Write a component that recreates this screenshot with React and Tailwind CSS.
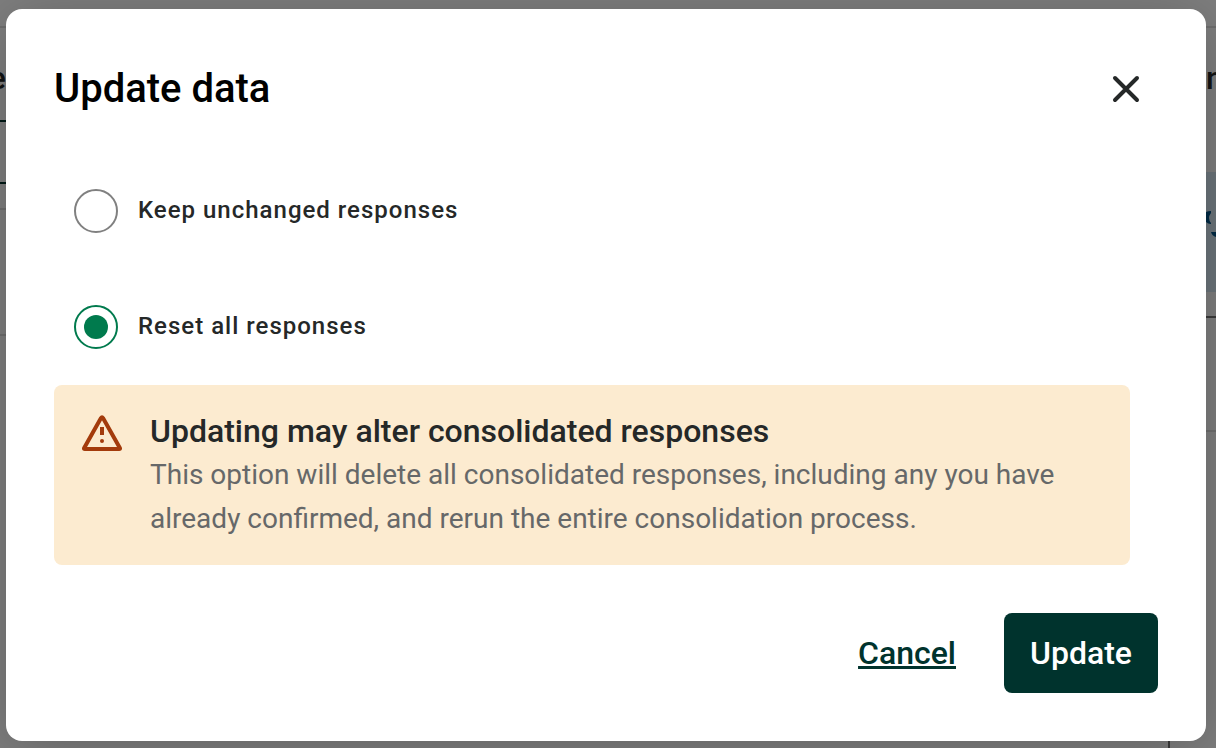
import React, { useState } from 'react';

const options = [
  { value: 'keep', label: 'Keep unchanged responses' },
  { value: 'reset', label: 'Reset all responses' },
];

const WarningIcon = () => (
  <svg viewBox="0 0 48 48" fill="none" className="size-12 shrink-0 text-[#a33b0c]" aria-hidden="true">
    <path d="M6 39.2 23 9q1-1.6 2 0l17 30.2q.3.8-.8.8H6.800q-1.100 0-.8-.8Z" stroke="currentColor" strokeWidth="4" strokeLinejoin="round" />
    <path d="M22 18h4v8h-4z" fill="currentColor" />
    <circle cx="24" cy="32" r="2" fill="currentColor" />
  </svg>
);

const CloseIcon = () => (
  <svg viewBox="0 0 28 28" fill="none" className="size-7" aria-hidden="true">
    <path d="m3 3 22 22M25 3 3 25" stroke="currentColor" strokeWidth="4" strokeLinecap="round" />
  </svg>
);

// The page that stays visible around the dialog
const PageBehind = () => (
  <div className="absolute inset-0 flex flex-col overflow-hidden bg-white" aria-hidden="true">
    <div className="h-7 shrink-0 border-b-2 border-[#dedede]" />
    <div className="flex flex-1 justify-between">
      <div className="flex w-[6px] flex-col overflow-hidden">
        <div className="flex h-[92px] justify-end pt-7 text-[32px] leading-[44px] font-medium text-[#252828]">e</div>
        <div className="h-16 border-y-2 border-[#00332d]" />
        <div className="mt-6 h-32 border-y-2 border-[#dedede]" />
      </div>
      <div className="flex w-12 flex-col overflow-hidden">
        <div className="h-36 pt-7 pl-[38px] text-[32px] leading-[44px] font-medium text-[#252828]">n</div>
        <div className="flex h-[120px] justify-end bg-[#d9ebf7]">
          <svg viewBox="0 0 10 120" className="h-[120px] w-[10px] text-[#00558a]">
            <path d="M0 40q2-1 5-1v2q-4 5 0 10v1q-3 0-5-2ZM5 60h5v5q-4-1-5-5Z" fill="currentColor" />
          </svg>
        </div>
        <div className="mt-6 h-[116px] border-t-2 border-b-2 border-t-[#777777] border-b-[#dedede]" />
        <div className="flex-1 border-l-2 border-[#777777]" />
      </div>
    </div>
    <div className="absolute inset-0 bg-black/50" />
  </div>
);

const App = () => {
  const [selected, setSelected] = useState('reset');

  return (
    <div className="relative min-h-screen pt-[9px] pr-[10px] pb-[7px] pl-[6px] font-['Roboto',sans-serif]">
      <PageBehind />
      <div
        role="dialog"
        aria-labelledby="dialog-title"
        className="relative flex flex-col rounded-2xl bg-white p-12 shadow-[0_8px_64px_rgba(0,0,0,0.24)]"
      >
        <header className="flex items-center justify-between">
          <h1 id="dialog-title" className="text-[40px] leading-[64px] font-medium text-black">Update data</h1>
          <button type="button" aria-label="Close" className="grid size-16 place-items-center text-[#252828]">
            <CloseIcon />
          </button>
        </header>

        {/* Options */}
        <div role="radiogroup" aria-labelledby="dialog-title" className="mt-12 flex flex-col gap-8 pl-5">
          {options.map(({ value, label }) => (
            <div key={value} className="flex h-[84px] items-center gap-5">
              <input
                type="radio"
                id={value}
                name="update-mode"
                value={value}
                checked={selected === value}
                onChange={() => setSelected(value)}
                className="grid size-11 appearance-none place-content-center rounded-full border-2 border-[#808080] before:size-6 before:rounded-full checked:border-[#007a4d] checked:before:bg-[#007a4d]"
              />
              <label htmlFor={value} className="pb-0.5 text-2xl font-medium tracking-[1px] text-[#252828]">{label}</label>
            </div>
          ))}
        </div>

        {/* Warning */}
        <div className="mt-4 mr-7 flex gap-6 rounded-lg bg-[#fcebd0] p-6">
          <WarningIcon />
          <div className="leading-[44px]">
            <h2 className="text-[32px] font-medium text-[#252828]">Updating may alter consolidated responses</h2>
            <p className="text-[28px] text-[#666869]">
              This option will delete all consolidated responses, including any you have already confirmed, and rerun the entire consolidation process.
            </p>
          </div>
        </div>

        {/* Actions */}
        <footer className="mt-12 flex items-center justify-end gap-12 text-[32px] font-medium">
          <button type="button" className="text-[#00332d] underline decoration-[3px]">Cancel</button>
          <button type="button" className="h-20 rounded-lg bg-[#00332d] px-[26px] text-white">Update</button>
        </footer>
      </div>
    </div>
  );
};

export default App;
